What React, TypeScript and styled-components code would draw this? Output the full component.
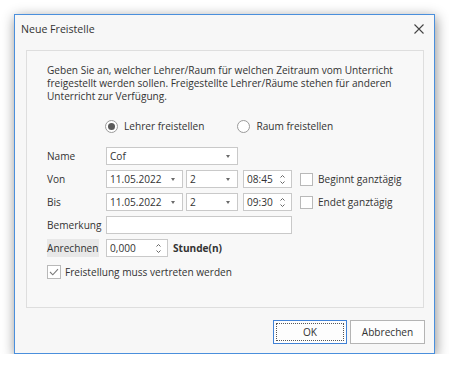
import React from 'react'
import styled, { createGlobalStyle } from 'styled-components'

const GlobalStyle = createGlobalStyle`
  body {
    margin: 0;
    background: #ffffff;
    font-family: "Open Sans", "Noto Sans", sans-serif;
    font-size: 10.1px;
    color: #333333;
  }
`

const Page = styled.div`
  padding: 14px 0 0 14px;
`

const Dialog = styled.div`
  width: 421px;
  height: 340px;
  box-sizing: border-box;
  background: #f7f7f7;
  border: 1px solid #4a8fdc;
  box-shadow: 1px 3px 12px rgba(0, 0, 0, 0.45);
  display: flex;
  flex-direction: column;
  padding: 0 10px 9px 11px;
`

const TitleBar = styled.div`
  height: 28px;
  display: flex;
  align-items: center;
  justify-content: space-between;
  margin-left: -5px;
  margin-right: -2px;
`

const Title = styled.div`
  font-size: 10.6px;
  color: #333;
`

const CloseButton = styled.div`
  width: 14px;
  height: 14px;
  display: flex;
  align-items: center;
  justify-content: center;
`

const Panel = styled.div`
  margin-top: 7px;
  height: 258px;
  box-sizing: border-box;
  border: 1px solid #dedede;
  background: #f8f8f8;
  padding: 13px 20px 0 20px;
`

const Description = styled.p`
  margin: 0;
  line-height: 13px;
`

const RadioRow = styled.div`
  display: flex;
  align-items: center;
  gap: 33px;
  margin: 16px 0 0 58px;
  height: 14px;
`

const RadioOption = styled.label`
  display: flex;
  align-items: center;
  gap: 6px;
`

const RadioCircle = styled.span<{ $checked?: boolean }>`
  width: 13px;
  height: 13px;
  box-sizing: border-box;
  border-radius: 50%;
  border: 1px solid #9a9a9a;
  background: #ffffff;
  display: flex;
  align-items: center;
  justify-content: center;
  &::after {
    content: '';
    width: 7px;
    height: 7px;
    border-radius: 50%;
    background: ${(p) => (p.$checked ? '#5a5a5a' : 'transparent')};
  }
`

const Form = styled.div`
  display: grid;
  grid-template-columns: 59px auto;
  grid-auto-rows: 18px;
  row-gap: 5px;
  margin-top: 14px;
  align-items: center;
`

const Label = styled.div<{ $highlight?: boolean }>`
  height: 18px;
  display: flex;
  align-items: center;
  width: 52px;
  background: ${(p) => (p.$highlight ? '#e8e8e8' : 'transparent')};
`

const Controls = styled.div`
  display: flex;
  align-items: center;
  height: 18px;
`

const Field = styled.div<{ $w: number; $gap?: number }>`
  width: ${(p) => p.$w}px;
  height: 18px;
  margin-right: ${(p) => p.$gap ?? 0}px;
  box-sizing: border-box;
  border: 1px solid #c9c9c9;
  background: #ffffff;
  display: flex;
  align-items: center;
  justify-content: space-between;
  padding: 0 5px 0 3px;
  color: #333;
`

const Arrow = styled.span`
  width: 0;
  height: 0;
  border-left: 2.5px solid transparent;
  border-right: 2.5px solid transparent;
  border-top: 3px solid #6a6a6a;
  margin-right: 2px;
`

const Spin = styled.span`
  display: flex;
  flex-direction: column;
  gap: 3px;
  margin-right: 1px;
`

const Box = styled.span<{ $size: number }>`
  width: ${(p) => p.$size}px;
  height: ${(p) => p.$size}px;
  box-sizing: border-box;
  border: 1px solid #b9b9b9;
  background: #ffffff;
  display: flex;
  align-items: center;
  justify-content: center;
  flex-shrink: 0;
`

const CheckLabel = styled.label`
  display: flex;
  align-items: center;
  gap: 5px;
  margin-left: 8px;
`

const Unit = styled.span`
  font-weight: 700;
  margin-left: 5px;
`

const BottomCheck = styled.label`
  display: flex;
  align-items: center;
  gap: 4px;
  margin-top: 7px;
  height: 15px;
`

const Footer = styled.div`
  margin-top: 12px;
  display: flex;
  justify-content: flex-end;
  gap: 3px;
  margin-right: -1px;
`

const Button = styled.button<{ $default?: boolean }>`
  width: ${(p) => (p.$default ? 74 : 75)}px;
  height: 24px;
  box-sizing: border-box;
  font: inherit;
  color: #333;
  background: #fdfdfd;
  border: 1px solid ${(p) => (p.$default ? '#3f81d6' : '#b4b4b4')};
  padding: 0;
  position: relative;
  &::after {
    content: '';
    display: ${(p) => (p.$default ? 'block' : 'none')};
    position: absolute;
    inset: 2px;
    border: 1px dotted #555;
  }
`

function DropArrow() {
  return <Arrow />
}

function Spinner() {
  return (
    <Spin>
      <svg width="5" height="3" viewBox="0 0 5 3">
        <path d="M0.5 2.5 L2.5 0.5 L4.5 2.5" fill="none" stroke="#666" strokeWidth="1" />
      </svg>
      <svg width="5" height="3" viewBox="0 0 5 3">
        <path d="M0.5 0.5 L2.5 2.5 L4.5 0.5" fill="none" stroke="#666" strokeWidth="1" />
      </svg>
    </Spin>
  )
}

function Check() {
  return (
    <svg width="10" height="8" viewBox="0 0 10 8">
      <path d="M1 4 L3.8 6.8 L9 1.2" fill="none" stroke="#7a7a7a" strokeWidth="1.1" />
    </svg>
  )
}

export default function App() {
  return (
    <Page>
      <GlobalStyle />
      <Dialog>
        <TitleBar>
          <Title>Neue Freistelle</Title>
          <CloseButton>
            <svg width="10" height="10" viewBox="0 0 10 10">
              <path d="M0.5 0.5 L9.5 9.5 M9.5 0.5 L0.5 9.5" stroke="#444" strokeWidth="1.1" />
            </svg>
          </CloseButton>
        </TitleBar>
        <Panel>
          <Description>
            Geben Sie an, welcher Lehrer/Raum für welchen Zeitraum vom Unterricht freigestellt werden
            sollen. Freigestellte Lehrer/Räume stehen für anderen Unterricht zur Verfügung.
          </Description>
          <RadioRow>
            <RadioOption>
              <RadioCircle $checked />
              Lehrer freistellen
            </RadioOption>
            <RadioOption>
              <RadioCircle />
              Raum freistellen
            </RadioOption>
          </RadioRow>
          <Form>
            <Label>Name</Label>
            <Controls>
              <Field $w={132}>
                Cof
                <DropArrow />
              </Field>
            </Controls>

            <Label>Von</Label>
            <Controls>
              <Field $w={77} $gap={3}>
                11.05.2022
                <DropArrow />
              </Field>
              <Field $w={52} $gap={5}>
                2
                <DropArrow />
              </Field>
              <Field $w={49}>
                08:45
                <Spinner />
              </Field>
              <CheckLabel>
                <Box $size={13} />
                Beginnt ganztägig
              </CheckLabel>
            </Controls>

            <Label>Bis</Label>
            <Controls>
              <Field $w={77} $gap={3}>
                11.05.2022
                <DropArrow />
              </Field>
              <Field $w={52} $gap={5}>
                2
                <DropArrow />
              </Field>
              <Field $w={49}>
                09:30
                <Spinner />
              </Field>
              <CheckLabel>
                <Box $size={13} />
                Endet ganztägig
              </CheckLabel>
            </Controls>

            <Label>Bemerkung</Label>
            <Controls>
              <Field $w={186} />
            </Controls>

            <Label $highlight>Anrechnen</Label>
            <Controls>
              <Field $w={62}>
                0,000
                <Spinner />
              </Field>
              <Unit>Stunde(n)</Unit>
            </Controls>
          </Form>
          <BottomCheck>
            <Box $size={14}>
              <Check />
            </Box>
            Freistellung muss vertreten werden
          </BottomCheck>
        </Panel>
        <Footer>
          <Button $default>OK</Button>
          <Button>Abbrechen</Button>
        </Footer>
      </Dialog>
    </Page>
  )
}
